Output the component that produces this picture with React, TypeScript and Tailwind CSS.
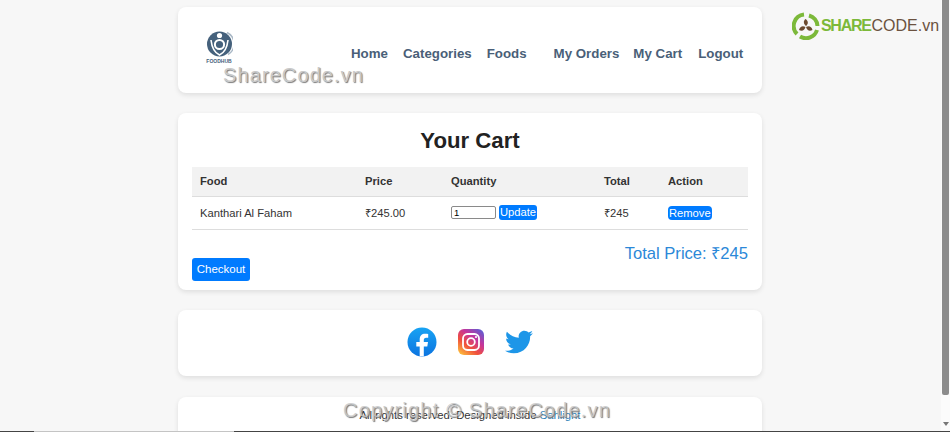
import { Fragment } from "react";
import { FaTwitter } from "react-icons/fa";

const sans = "font-['Liberation_Sans',Arial,sans-serif]";

function FoodHubLogo() {
  return (
    <div className="flex w-[28px] flex-col items-center">
      <svg width="27" height="26" viewBox="0 0 27 26">
        <circle cx="13.5" cy="13" r="12.5" fill="#45617c" />
        <path d="M21 1.5a12.5 12.5 0 0 1 1 22" fill="none" stroke="#a9b8c6" strokeWidth="1.5" />
        <circle cx="13.5" cy="13.5" r="4.6" fill="none" stroke="#fff" strokeWidth="2" />
        <circle cx="13.5" cy="4.5" r="2.6" fill="#fff" />
        <path d="M5 9c1 9 4 13 8.500 15C18 22 21 18 22 9" fill="none" stroke="#fff" strokeWidth="1.600" />
      </svg>
      <span className="mt-[1px] text-[5px] leading-[6px] font-bold text-[#45617c]">FOODHUB</span>
    </div>
  );
}

function ShareCodeLogo() {
  return (
    <svg width="28" height="28" viewBox="0 0 28 28">
      <path d="M12 2.500A11.500 11.500 0 0 0 5 22" fill="none" stroke="#7cb93a" strokeWidth="4" />
      <path d="M8 24.500A11.500 11.500 0 0 0 25 18" fill="none" stroke="#7cb93a" strokeWidth="4" />
      <path d="M17 3.500A11.500 11.500 0 0 1 25.500 14" fill="none" stroke="#7cb93a" strokeWidth="4" />
      <path d="M13.500 7c3 2 3 5 .500 7-2.500-2-3-5-.500-7z" fill="#6b4a2f" />
      <path d="M20.500 18c-3 1.500-5.500.500-6.500-3 3-1.500 5.500-.500 6.500 3z" fill="#6b4a2f" />
      <path d="M7 18c1-3.500 3.500-4.500 6.500-3-1 3.500-3.500 4.500-6.500 3z" fill="#6b4a2f" />
    </svg>
  );
}

function SocialIcons() {
  return (
    <Fragment>
      <svg width="30" height="30" viewBox="0 0 30 30">
        <defs>
          <linearGradient id="fb" x1="0" y1="0" x2="0" y2="1">
            <stop offset="0" stopColor="#18a3f3" />
            <stop offset="1" stopColor="#0c74e0" />
          </linearGradient>
        </defs>
        <circle cx="15" cy="15" r="14.500" fill="url(#fb)" />
        <path
          d="M12.700 29.300V19.400H9.300v-4.400h3.400v-2.600c0-3.700 2.100-5.700 5.400-5.700 1.200 0 2.400.100 3.100.300v3.800h-2c-1.800 0-2.400 1-2.400 2.300v1.900h4.200l-.700 4.400h-3.500v9.900z"
          fill="#fff"
        />
      </svg>
      <svg width="26" height="26" viewBox="0 0 26 26">
        <defs>
          <linearGradient id="ig" x1="0.100" y1="1" x2="0.900" y2="0">
            <stop offset="0" stopColor="#fdc13c" />
            <stop offset="0.350" stopColor="#f0503c" />
            <stop offset="0.650" stopColor="#c5359b" />
            <stop offset="1" stopColor="#5a5fd6" />
          </linearGradient>
        </defs>
        <rect width="26" height="26" rx="6" fill="url(#ig)" />
        <rect x="5" y="5" width="16" height="16" rx="4.500" fill="none" stroke="#fff" strokeWidth="1.800" />
        <circle cx="13" cy="13" r="3.800" fill="none" stroke="#fff" strokeWidth="1.800" />
        <circle cx="18" cy="8" r="1.100" fill="#fff" />
      </svg>
      <FaTwitter className="h-[28px] w-[28px] text-[#1d96e8]" />
    </Fragment>
  );
}

const links = [
  { label: "Home", className: "ml-0" },
  { label: "Categories", className: "ml-[15px]" },
  { label: "Foods", className: "ml-[15px]" },
  { label: "My Orders", className: "ml-[27px]" },
  { label: "My Cart", className: "ml-[14px]" },
  { label: "Logout", className: "ml-[16px]" },
];

export default function App() {
  return (
    <div className={`relative flex h-[432px] w-[950px] overflow-hidden bg-[#f7f7f7] ${sans}`}>
      <main className="flex w-[941px] flex-col items-center pt-[7px]">
        {/* Header */}
        <header className="ml-[-1px] flex h-[86px] w-[584px] shrink-0 items-start rounded-[8px] bg-white pt-[24px] pl-[27px] shadow-[0_2px_5px_rgba(0,0,0,0.1)]">
          <FoodHubLogo />
          <nav className="mt-[14px] ml-[118px] flex text-[13.300px] leading-[18px] font-bold whitespace-nowrap text-[#4a5f78]">
            {links.map((link) => (
              <a key={link.label} className={link.className}>
                {link.label}
              </a>
            ))}
          </nav>
        </header>

        {/* Cart */}
        <section className="mt-[20px] ml-[-1px] flex h-[177px] w-[584px] shrink-0 flex-col rounded-[8px] bg-white px-[14px] pt-[14px] shadow-[0_2px_5px_rgba(0,0,0,0.1)]">
          <h1 className="text-center text-[22.200px] leading-[28px] font-bold text-[#222]">Your Cart</h1>
          <table className="mt-[12px] w-[556px] table-fixed border-collapse text-[11.200px] text-[#333]">
            <thead>
              <tr className="h-[29px] border-b border-[#ddd] bg-[#f2f2f2] text-left">
                <th className="w-[165px] pl-[8px] font-bold">Food</th>
                <th className="w-[86px] pl-[8px] font-bold">Price</th>
                <th className="w-[153px] pl-[8px] font-bold">Quantity</th>
                <th className="w-[64px] pl-[8px] font-bold">Total</th>
                <th className="pl-[8px] font-bold">Action</th>
              </tr>
            </thead>
            <tbody>
              <tr className="h-[33px] border-b border-[#ddd]">
                <td className="pt-[1px] pl-[8px]">Kanthari Al Faham</td>
                <td className="pt-[1px] pl-[8px]">₹245.00</td>
                <td className="pl-[8px]">
                  <div className="flex items-center">
                    <input
                      readOnly
                      value="1"
                      className="h-[13px] w-[45px] rounded-[2px] border border-[#8a8a8a] bg-white px-[2px] text-[9.500px] leading-[11px] text-black"
                    />
                    <button className="ml-[3px] h-[15px] rounded-[3px] bg-[#007bff] px-[1px] text-[11.200px] leading-[15px] text-white">
                      Update
                    </button>
                  </div>
                </td>
                <td className="pt-[1px] pl-[8px]">₹245</td>
                <td className="pl-[8px]">
                  <button className="block h-[14px] rounded-[4px] bg-[#007bff] px-[1px] text-[11.200px] leading-[14px] text-white">
                    Remove
                  </button>
                </td>
              </tr>
            </tbody>
          </table>
          <p className="mt-[14px] text-right text-[16.600px] leading-[20px] text-[#2b88d8]">Total Price: ₹245</p>
          <div className="mt-[-6px]">
            <button className="block h-[23px] w-[58px] rounded-[3px] bg-[#007bff] text-center text-[11.500px] leading-[23px] text-white">
              Checkout
            </button>
          </div>
        </section>

        {/* Social links */}
        <section className="mt-[20px] ml-[-1px] flex h-[66px] w-[584px] shrink-0 items-center justify-center gap-[21px] rounded-[8px] bg-white pb-[2px] shadow-[0_2px_5px_rgba(0,0,0,0.1)]">
          <SocialIcons />
        </section>

        {/* Footer */}
        <footer className="mt-[21px] ml-[-1px] h-[40px] w-[584px] shrink-0 rounded-t-[8px] bg-white pt-[11px] text-center text-[11.300px] leading-[14px] text-[#333] shadow-[0_2px_5px_rgba(0,0,0,0.1)]">
          All rights reserved. Designed inside <span className="text-[#2f7fb8]">Sahlight</span>
        </footer>
      </main>

      {/* Scrollbar */}
      <div className="flex w-[9px] shrink-0 flex-col items-center bg-[#fbfbfb]">
        <div className="h-[395px] w-[7px] rounded-b-[2px] bg-[#8c8c8c]" />
        <div className="mt-[27px] h-0 w-0 border-x-[3px] border-t-[4px] border-x-transparent border-t-[#777]" />
      </div>

      {/* ShareCode watermarks */}
      <div className="absolute top-[12px] left-[792px] flex items-center whitespace-nowrap">
        <ShareCodeLogo />
        <span className="ml-[1px] text-[16px] leading-[24px] font-bold tracking-[-1.300px] text-[#7cb93a]">SHARE</span>
        <span className="ml-[1px] text-[16px] leading-[24px] text-[#6b5240]">CODE.vn</span>
      </div>
      <span className="absolute top-[63px] left-[223px] text-[20px] leading-[24px] tracking-[1.100px] text-[#c9c9c9] [text-shadow:1px_1px_1px_#777]">
        ShareCode.vn
      </span>
      <span className="absolute top-[398px] left-[343px] text-[20px] leading-[24px] tracking-[1.200px] text-[#c9c9c9]/85 [text-shadow:1px_1px_1px_#777]">
        Copyright © ShareCode.vn
      </span>

      {/* Taskbar edge at the bottom of the capture */}
      <div className="absolute bottom-0 left-0 flex h-[1px] w-[950px]">
        <div className="w-[34px] bg-[#444]" />
        <div className="w-[200px] bg-[#c4c4c4]" />
        <div className="flex-1 bg-[#444]" />
      </div>
    </div>
  );
}
